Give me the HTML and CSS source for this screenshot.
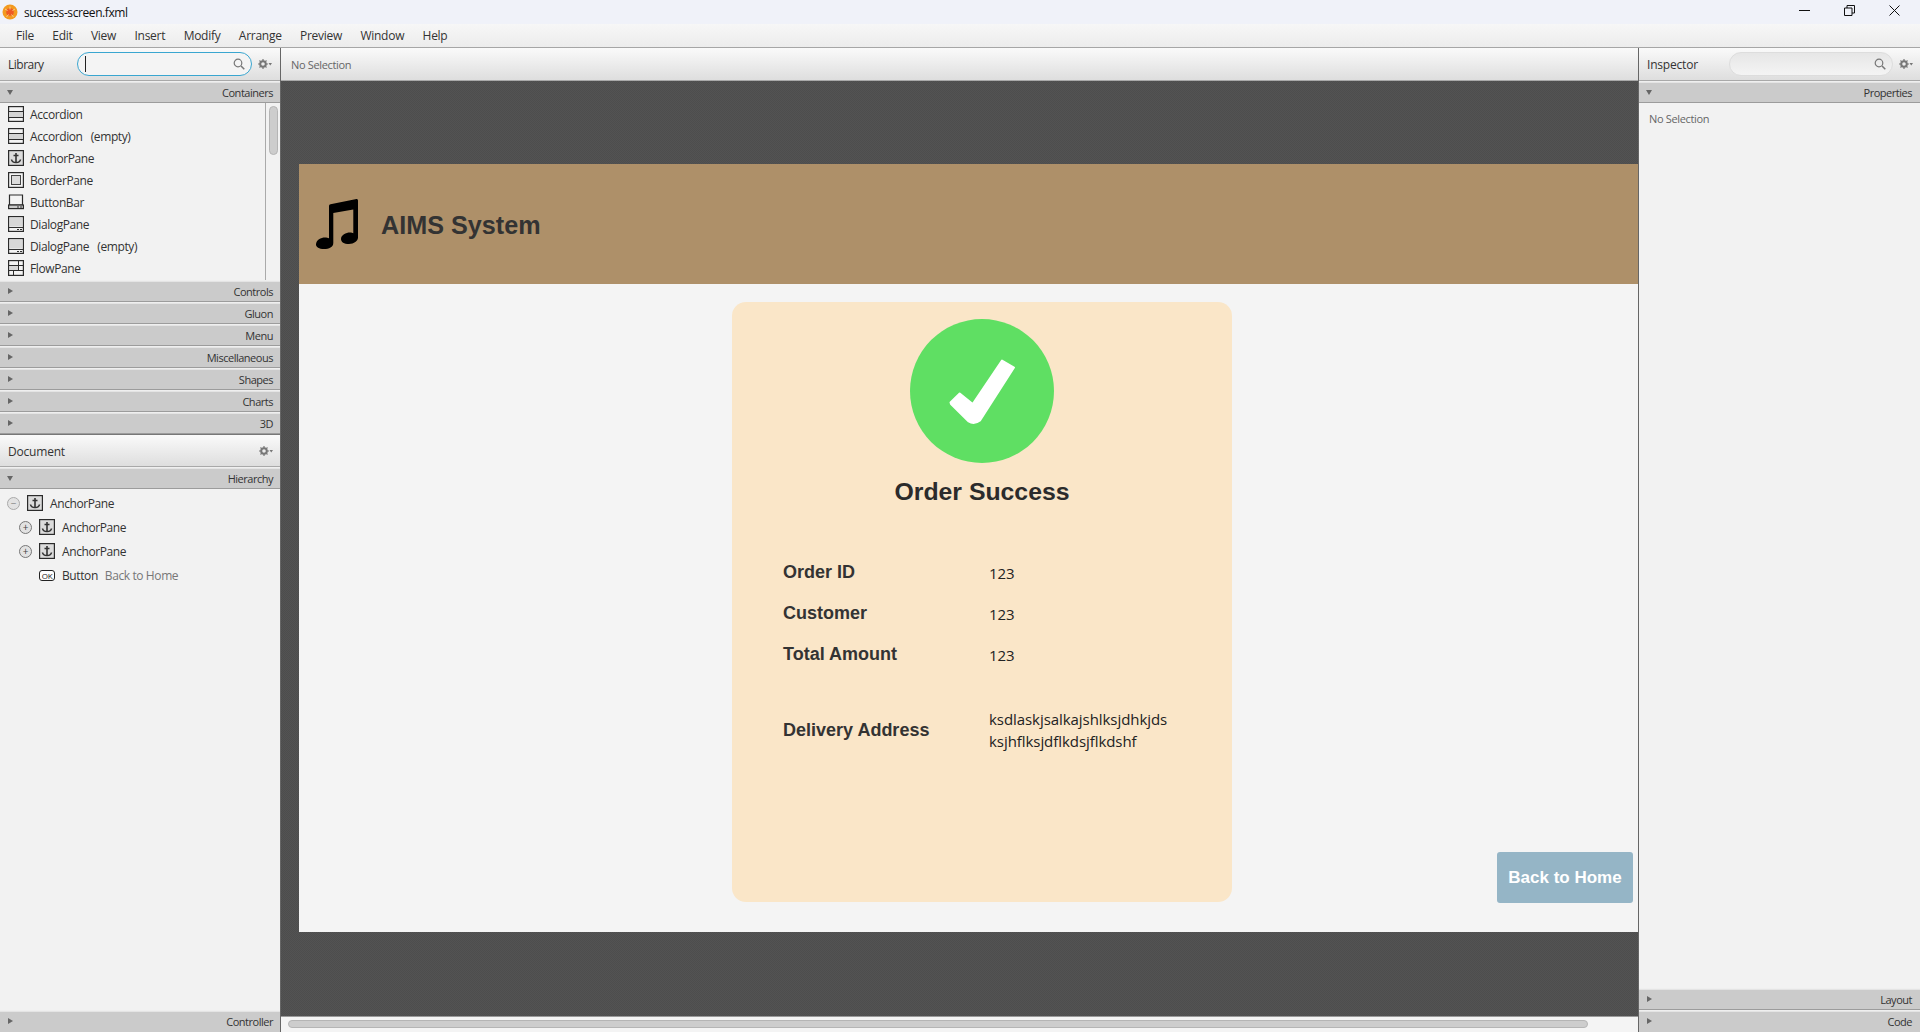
FILE: index.html
```html
<!DOCTYPE html>
<html>
<head>
    <meta charset="utf-8">
    <title>success-screen.fxml</title>
    <link rel="stylesheet" href="styles.css">
</head>
<body>
<svg class="defs" width="0" height="0">
    <symbol id="i-anchor" viewBox="0 0 16 16"><rect x=".6" y=".6" width="14.8" height="14.8" fill="#dcdcdc" stroke="#2b2b2b" stroke-width="1.2"/><path d="M8 3v9.500M5.500 5.500h5M3.500 9.500c.3 2 2 3 4.500 3s4.200-1 4.500-3" fill="none" stroke="#333" stroke-width="1.6"/></symbol>
    <symbol id="i-accordion" viewBox="0 0 16 16"><rect x=".6" y=".6" width="14.8" height="14.8" fill="#f4f4f4" stroke="#2b2b2b" stroke-width="1.2"/><rect x="1" y="5.500" width="14" height="6" fill="#d4d4d4"/><path d="M1 5.500h14M1 11.500h14" stroke="#2b2b2b" stroke-width="1.1"/></symbol>
    <symbol id="i-border" viewBox="0 0 16 16"><rect x=".6" y=".6" width="14.8" height="14.8" fill="#f4f4f4" stroke="#2b2b2b" stroke-width="1.2"/><rect x="3.500" y="3.500" width="9" height="9" fill="#dcdcdc" stroke="#444"/></symbol>
    <symbol id="i-buttonbar" viewBox="0 0 16 16"><path d="M1.500 1h13v10h-13z" fill="#f4f4f4" stroke="#2b2b2b" stroke-width="1.2"/><rect x=".6" y="11" width="14.8" height="3.600" fill="#ccc" stroke="#2b2b2b" stroke-width="1.2"/><path d="M9 13h2M12 13h2" stroke="#333"/></symbol>
    <symbol id="i-dialog" viewBox="0 0 16 16"><rect x=".6" y=".6" width="14.8" height="14.8" fill="#f4f4f4" stroke="#2b2b2b" stroke-width="1.2"/><rect x="2" y="2" width="12" height="8.500" fill="#d8d8d8"/><path d="M1 11.500h14M9 13.500h2M12 13.500h2" stroke="#333"/></symbol>
    <symbol id="i-flow" viewBox="0 0 16 16"><rect x=".6" y=".6" width="14.8" height="14.8" fill="#f4f4f4" stroke="#2b2b2b" stroke-width="1.2"/><rect x="2" y="6" width="8.500" height="4" fill="#d8d8d8"/><path d="M1 5.500h14M1 10.500h14M10.500 1v4.500M5.500 11v4M10.500 6v4" stroke="#2b2b2b"/></symbol>
    <symbol id="i-gear" viewBox="0 0 14 10"><circle cx="5" cy="5" r="2.800" fill="none" stroke="#777" stroke-width="2"/><path d="M5 0v2M5 8v2M0 5h2M8 5h2M1.500 1.500l1.300 1.300M7.200 7.200l1.300 1.300M8.500 1.500L7.200 2.800M2.800 7.200L1.500 8.500" stroke="#777" stroke-width="1.200"/><path d="M10.500 4h3.500l-1.750 2.500z" fill="#777"/></symbol>
    <symbol id="i-search" viewBox="0 0 12 12"><circle cx="5" cy="5" r="3.800" fill="none" stroke="#777" stroke-width="1.200"/><path d="M8 8l3.300 3.300" stroke="#777" stroke-width="1.500"/></symbol>
</svg>

<div class="titlebar">
    <svg class="app-icon" viewBox="0 0 16 16"><circle cx="8" cy="8" r="7.500" fill="#f39a1f"/><circle cx="8" cy="8" r="3.800" fill="#ee5a24"/><path d="M8 2.500v3M3 5l2.500 1.500M13 5l-2.500 1.500M4.500 13l2-2.500M11.500 13l-2-2.500" stroke="#f8c98a" stroke-width="1"/></svg>
    <span class="title-text">success-screen.fxml</span>
    <div class="win-btns">
        <svg class="win-btn" viewBox="0 0 11 11"><path d="M0 5.500h11" stroke="#111" stroke-width="1"/></svg>
        <svg class="win-btn" viewBox="0 0 11 11"><path d="M.5 3h7.500v7.500H.5zM3 3V.5h7.500V8H8" fill="none" stroke="#111" stroke-width="1"/></svg>
        <svg class="win-btn" viewBox="0 0 11 11"><path d="M.5.5l10 10M10.500.5l-10 10" stroke="#111" stroke-width="1"/></svg>
    </div>
</div>

<div class="menubar">
    <span>File</span><span>Edit</span><span>View</span><span>Insert</span><span>Modify</span><span>Arrange</span><span>Preview</span><span>Window</span><span>Help</span>
</div>

<div class="main">
    <div class="left">
        <div class="tool">
            <span class="tool-label lib-label">Library</span>
            <div class="search focus"><i class="caret"></i><svg class="search-ic"><use href="#i-search"/></svg></div>
            <svg class="gear"><use href="#i-gear"/></svg>
        </div>
        <div class="sec open"><i class="arrow"></i>Containers</div>
        <div class="list-wrap">
            <ul class="lib-list">
                <li><svg class="ic"><use href="#i-accordion"/></svg>Accordion</li>
                <li><svg class="ic"><use href="#i-accordion"/></svg>Accordion&nbsp;&nbsp; (empty)</li>
                <li><svg class="ic"><use href="#i-anchor"/></svg>AnchorPane</li>
                <li><svg class="ic"><use href="#i-border"/></svg>BorderPane</li>
                <li><svg class="ic"><use href="#i-buttonbar"/></svg>ButtonBar</li>
                <li><svg class="ic"><use href="#i-dialog"/></svg>DialogPane</li>
                <li><svg class="ic"><use href="#i-dialog"/></svg>DialogPane&nbsp;&nbsp; (empty)</li>
                <li><svg class="ic"><use href="#i-flow"/></svg>FlowPane</li>
            </ul>
            <div class="vscroll"><div class="vthumb"></div></div>
        </div>
        <div class="sec"><i class="arrow"></i>Controls</div>
        <div class="sec"><i class="arrow"></i>Gluon</div>
        <div class="sec"><i class="arrow"></i>Menu</div>
        <div class="sec"><i class="arrow"></i>Miscellaneous</div>
        <div class="sec"><i class="arrow"></i>Shapes</div>
        <div class="sec"><i class="arrow"></i>Charts</div>
        <div class="sec"><i class="arrow"></i>3D</div>
        <div class="tool doc-tool">
            <span class="tool-label">Document</span>
            <svg class="gear"><use href="#i-gear"/></svg>
        </div>
        <div class="sec open"><i class="arrow"></i>Hierarchy</div>
        <ul class="tree">
            <li class="lvl0"><i class="toggle">&minus;</i><svg class="ic"><use href="#i-anchor"/></svg>AnchorPane</li>
            <li class="lvl1"><i class="toggle">+</i><svg class="ic"><use href="#i-anchor"/></svg>AnchorPane</li>
            <li class="lvl1"><i class="toggle">+</i><svg class="ic"><use href="#i-anchor"/></svg>AnchorPane</li>
            <li class="lvl1"><i class="toggle blank"></i><span class="ok">OK</span>Button<span class="tree-val">Back to Home</span></li>
        </ul>
        <div class="sec last"><i class="arrow"></i>Controller</div>
    </div>

    <div class="center">
        <div class="tool center-tool"><span class="crumb">No Selection</span></div>
        <div class="stage">
            <div class="scene">
                <div class="scene-head">
                    <svg class="note" viewBox="0 0 42 50"><path d="M13 7Q13 5.500 14.500 5.200L40.500 0Q42-.1 42 1.500V38.500C42 42 38 45 33 45C28 45 25 43 25 40C25 36 30 33.500 34 33.500C35.500 33.500 36.500 33.800 37.300 34.200V10.500L17.300 14V44C17.300 48 13 50 8 50C3 50 0 48 0 45.500C0 41 5 38.500 9 38.500C10.500 38.500 12 38.800 13 39.200Z"/></svg>
                    <span class="brand">AIMS System</span>
                </div>
                <div class="scene-body">
                    <div class="card">
                        <svg class="tick" viewBox="0 0 144 144">
                            <circle cx="72" cy="72" r="72" fill="#5fdf63"/>
                            <path d="M49.700 74.500L62.700 85L92 41.500L104 48.500L70 101.500Q64 106 58.700 102.500L41 85L40.500 83.500Z" fill="#fff" stroke="#fff" stroke-width="2" stroke-linejoin="round"/>
                        </svg>
                        <h1 class="card-title">Order Success</h1>
                        <div class="info">
                            <div class="row"><span class="key">Order ID</span><span class="val">123</span></div>
                            <div class="row"><span class="key">Customer</span><span class="val">123</span></div>
                            <div class="row"><span class="key">Total Amount</span><span class="val">123</span></div>
                            <div class="row addr"><span class="key">Delivery Address</span><span class="val">ksdlaskjsalkajshlksjdhkjds<br>ksjhflksjdflkdsjflkdshf</span></div>
                        </div>
                    </div>
                    <div class="back-btn">Back to Home</div>
                </div>
            </div>
        </div>
        <div class="hscroll"><div class="hthumb"></div></div>
    </div>

    <div class="right">
        <div class="tool">
            <span class="tool-label insp-label">Inspector</span>
            <div class="search insp"><svg class="search-ic"><use href="#i-search"/></svg></div>
            <svg class="gear"><use href="#i-gear"/></svg>
        </div>
        <div class="sec open"><i class="arrow"></i>Properties</div>
        <div class="insp-body">No Selection</div>
        <div class="sec"><i class="arrow"></i>Layout</div>
        <div class="sec last"><i class="arrow"></i>Code</div>
    </div>
</div>
</body>
</html>
```

FILE: styles.css
```css
* {
    box-sizing: border-box;
}

html, body {
    margin: 0;
    height: 100%;
    overflow: hidden;
}

body {
    display: flex;
    flex-direction: column;
    width: 1920px;
    height: 1032px;
    font-family: "Open Sans", "Noto Sans", sans-serif;
    font-size: 12px;
    color: #333;
    background: #f2f2f2;
}

.defs {
    position: absolute;
}

.titlebar {
    height: 24px;
    display: flex;
    align-items: center;
    background: #f0f2f9;
    padding-left: 2px;
    flex: none;
}

.app-icon {
    width: 16px;
    height: 16px;
}

.title-text {
    margin-left: 6px;
    font-size: 12px;
    letter-spacing: -.41px;
    color: #111;
}

.win-btns {
    margin-left: auto;
    display: flex;
    margin-bottom: 3px;
}

.win-btn {
    width: 11px;
    height: 11px;
    margin-right: 34px;
}

.win-btn:last-child {
    margin-right: 20px;
}

.menubar {
    height: 24px;
    flex: none;
    display: flex;
    align-items: center;
    gap: 18.4px;
    padding-left: 16px;
    background: linear-gradient(#f7f7f7, #ececec);
    border-bottom: 1px solid #a6a6a6;
    letter-spacing: -.27px;
    color: #333;
}

.main {
    flex: 1;
    display: flex;
    min-height: 0;
}

.left {
    width: 281px;
    flex: none;
    display: flex;
    flex-direction: column;
    border-right: 1px solid #666;
}

.right {
    flex: 1;
    display: flex;
    flex-direction: column;
    border-left: 1px solid #666;
}

.center {
    width: 1357px;
    flex: none;
    display: flex;
    flex-direction: column;
}

.tool {
    height: 33px;
    flex: none;
    display: flex;
    align-items: center;
    padding-left: 8px;
    background: linear-gradient(#fafafa, #dedede);
    border-bottom: 1px solid #a9a9a9;
}

.tool-label {
    font-size: 12px;
    letter-spacing: -.2px;
}

.lib-label {
    width: 69px;
    letter-spacing: -.5px;
}

.insp-label {
    width: 82px;
}

.doc-tool {
    justify-content: space-between;
    padding: 1px 7px 0 8px;
    border-top: 1px solid #777;
}

.search {
    width: 175px;
    height: 24px;
    border-radius: 12px;
    border: 1px solid #ddd;
    background: linear-gradient(#e6e6e6, #f4f4f4);
    display: flex;
    align-items: center;
    padding: 0 6px 0 7px;
}

.search.focus {
    border-color: #3aa6d0;
    background: #f4f4f4;
}

.search.insp {
    width: 164px;
}

.caret {
    width: 1px;
    height: 16px;
    background: #222;
}

.search-ic {
    width: 12px;
    height: 12px;
    margin-left: auto;
}

.gear {
    width: 14px;
    height: 10px;
    margin-left: 6px;
}

.doc-tool .gear {
    margin-left: 0;
}

.center-tool {
    padding-left: 10px;
}

.crumb {
    font-size: 11px;
    letter-spacing: -.35px;
    color: #666;
}

.sec {
    height: 22px;
    flex: none;
    display: flex;
    align-items: center;
    justify-content: flex-end;
    padding: 0 7px 0 0;
    position: relative;
    font-size: 11px;
    letter-spacing: -.48px;
    background: #cbcbcb;
    border-top: 1px solid #efefef;
    border-bottom: 1px solid #9c9c9c;
    box-shadow: inset 0 1px 0 #e4e4e4;
}

.right .sec {
    padding-right: 8px;
}

.sec.last {
    border-bottom: none;
}

.arrow {
    position: absolute;
    left: 8px;
    top: 7px;
    width: 0;
    height: 0;
    border-left: 5px solid #666;
    border-top: 3px solid transparent;
    border-bottom: 3px solid transparent;
}

.sec.open .arrow {
    left: 7px;
    top: 8px;
    border-top: 5px solid #666;
    border-left: 3px solid transparent;
    border-right: 3px solid transparent;
    border-bottom: none;
}

.list-wrap {
    height: 177px;
    flex: none;
    display: flex;
}

.lib-list {
    list-style: none;
    margin: 0;
    padding: 0;
    flex: 1;
}

.lib-list li {
    height: 22px;
    display: flex;
    align-items: center;
    padding-left: 8px;
    letter-spacing: -.4px;
    white-space: pre;
}

.ic {
    width: 16px;
    height: 16px;
    margin-right: 6px;
    flex: none;
}

.vscroll {
    width: 15px;
    border-left: 1px solid #aaa;
    padding: 3px 2px 0 3px;
}

.vthumb {
    height: 49px;
    background: #cdcdcd;
    border: 1px solid #b5b5b5;
    border-radius: 5px;
}

.tree {
    list-style: none;
    margin: 0;
    padding: 2px 0 0;
    flex: 1;
}

.tree li {
    height: 24px;
    display: flex;
    align-items: center;
    letter-spacing: -.4px;
}

.tree .ic {
    margin-right: 7px;
}

.lvl0 {
    padding-left: 7px;
}

.lvl1 {
    padding-left: 19px;
}

.toggle {
    width: 13px;
    height: 13px;
    border-radius: 50%;
    border: 1px solid #777;
    background: #e2e2e2;
    margin-right: 7px;
    font-style: normal;
    font-size: 10px;
    line-height: 10px;
    text-align: center;
    color: #444;
}

.lvl0 .toggle {
    border-color: #aaa;
    color: #888;
}

.toggle.blank {
    visibility: hidden;
}

.ok {
    width: 16px;
    height: 11px;
    margin-right: 7px;
    border: 1px solid #222;
    border-radius: 3px;
    background: #fff;
    font-size: 8px;
    line-height: 9px;
    text-align: center;
    color: #222;
    letter-spacing: -.3px;
}

.tree-val {
    margin-left: 7px;
    color: #777;
}

.stage {
    flex: 1;
    padding: 83px 0 84px 18px;
    background-color: #505050;
    background-image: conic-gradient(#535353 25%, #4d4d4d 0 50%, #535353 0 75%, #4d4d4d 0);
    background-size: 2px 2px;
    min-height: 0;
    display: flex;
}

.scene {
    flex: 1;
    display: flex;
    flex-direction: column;
    background: #f4f4f4;
}

.scene-head {
    height: 120px;
    flex: none;
    background: #ae9069;
    display: flex;
    align-items: center;
    padding-left: 17px;
}

.note {
    width: 42px;
    height: 50px;
}

.brand {
    margin-left: 23px;
    padding-top: 2px;
    font-family: "Liberation Sans", Arial, sans-serif;
    font-size: 25.2px;
    font-weight: bold;
    color: #333;
}

.scene-body {
    flex: 1;
    position: relative;
    padding: 18px 0 0 433px;
}

.card {
    width: 500px;
    height: 600px;
    background: #fae6c8;
    border-radius: 14px;
    display: flex;
    flex-direction: column;
    align-items: center;
    padding-top: 17px;
}

.tick {
    width: 144px;
    height: 144px;
    flex: none;
}

.card-title {
    margin: 13px 0 0;
    font-family: "Liberation Sans", Arial, sans-serif;
    font-size: 24.8px;
    font-weight: bold;
    line-height: 32px;
    color: #2b2b2b;
}

.info {
    align-self: stretch;
    padding: 44px 0 0 51px;
}

.row {
    display: grid;
    grid-template-columns: 206px 1fr;
    align-items: center;
    height: 41px;
}

.row.addr {
    margin-top: 33px;
    height: 44px;
}

.key {
    font-family: "Liberation Sans", Arial, sans-serif;
    font-size: 18px;
    font-weight: bold;
    color: #333;
}

.val {
    font-size: 15px;
    line-height: 22px;
    letter-spacing: -.06px;
    color: #222;
    padding-top: 1px;
}

.addr .val {
    padding-top: 0;
}

.back-btn {
    position: absolute;
    right: 5px;
    bottom: 29px;
    width: 136px;
    height: 51px;
    border-radius: 3px;
    background: #95b5c6;
    display: flex;
    align-items: center;
    justify-content: center;
    font-family: "Liberation Sans", Arial, sans-serif;
    font-size: 17px;
    font-weight: bold;
    color: #fff;
}

.hscroll {
    height: 16px;
    flex: none;
    border-top: 1px solid #999;
    background: #f4f4f4;
    padding: 3px 0 0 7px;
}

.hthumb {
    width: 1300px;
    height: 8px;
    background: #cdcdcd;
    border: 1px solid #b5b5b5;
    border-radius: 4px;
}

.insp-body {
    flex: 1;
    padding: 8px 0 0 10px;
    font-size: 11px;
    letter-spacing: -.35px;
    color: #666;
}
```
